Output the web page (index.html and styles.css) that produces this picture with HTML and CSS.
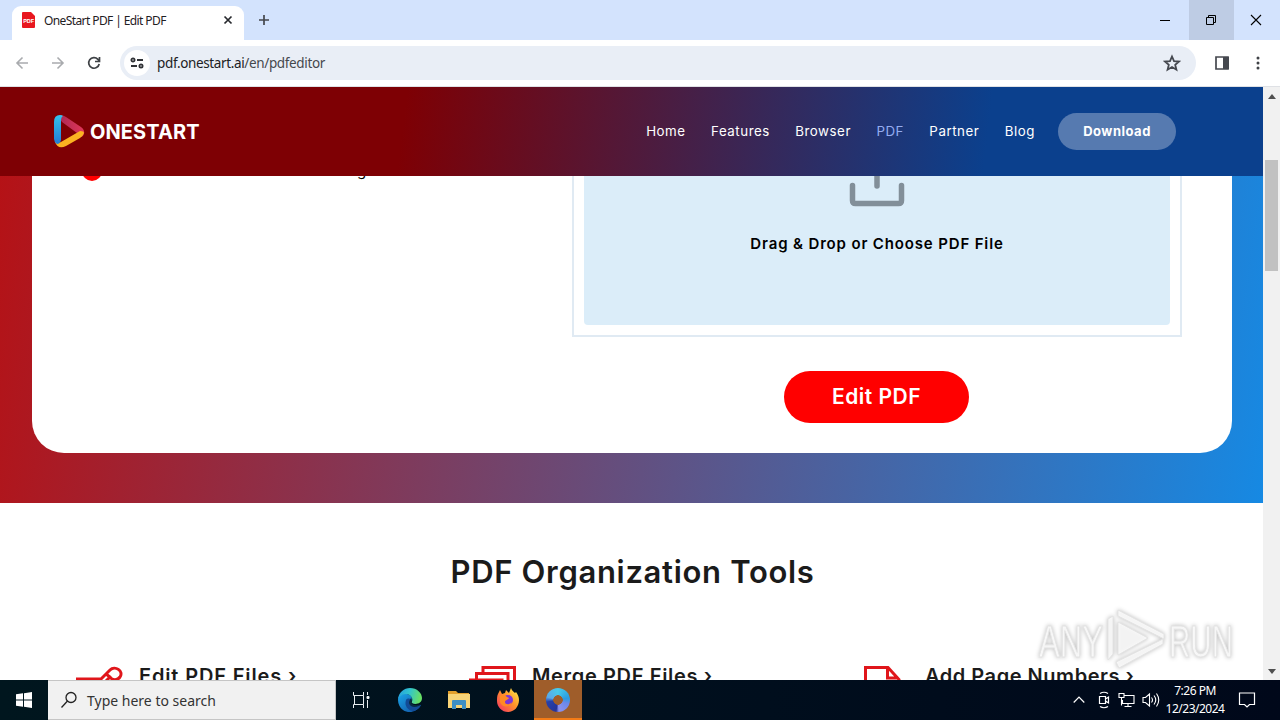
FILE: index.html
```html
<!DOCTYPE html>
<html lang="en">
<head>
    <meta charset="UTF-8">
    <meta name="viewport" content="width=device-width, initial-scale=1.0">
    <title>OneStart PDF | Edit PDF</title>
    <link rel="stylesheet" href="styles.css">
</head>
<body>
    <div class="tab-strip">
        <div class="tab">
            <svg class="favicon" width="14" height="16" viewBox="0 0 14 16"><path fill="#e8171f" d="M1 0h8l4 4v11q0 1-1 1H1q-1 0-1-1V1q0-1 1-1z"/><text x="6.7" y="11" text-anchor="middle" class="favicon-text">PDF</text></svg>
            <span class="tab-title">OneStart PDF | Edit PDF</span>
            <svg class="tab-close" width="10" height="10" viewBox="0 0 10 10"><path d="M1.5 1.5l7 7m0-7l-7 7" stroke="#27292d" stroke-width="1.7"/></svg>
        </div>
        <svg class="new-tab" width="12" height="12" viewBox="0 0 12 12"><path d="M6 1v10M1 6h10" stroke="#44474c" stroke-width="1.7"/></svg>
        <div class="window-buttons">
            <span><svg width="12" height="12" viewBox="0 0 12 12"><path d="M1 6.5h10" stroke="#000"/></svg></span>
            <span class="restore"><svg width="12" height="12" viewBox="0 0 12 12" fill="none" stroke="#000"><path d="M1.5 3.5h7v7h-7zM3.5 3.500v-2h7v7h-2"/></svg></span>
            <span><svg width="12" height="12" viewBox="0 0 12 12"><path d="M1 1l10 10M11 1L1 11" stroke="#000" stroke-width="1.1"/></svg></span>
        </div>
    </div>

    <div class="toolbar">
        <svg width="16" height="16" viewBox="0 0 16 16" fill="none" stroke="#a9abae" stroke-width="1.6"><path d="M14 8H3m5.500-5.500L3 8l5.500 5.500"/></svg>
        <svg width="16" height="16" viewBox="0 0 16 16" fill="none" stroke="#a9abae" stroke-width="1.6"><path d="M2 8h11M7.500 2.500L13 8l-5.500 5.500"/></svg>
        <svg width="16" height="16" viewBox="0 0 16 16" fill="none" stroke="#3f4246" stroke-width="1.7"><path d="M13.200 9a5.300 5.300 0 1 1-1.300-4.700L13.500 6M13.500 2v4.500H9"/></svg>
        <div class="address-bar">
            <span class="site-info"><svg width="14" height="14" viewBox="0 0 14 14" fill="none" stroke="#303236" stroke-width="1.8"><circle cx="3" cy="4" r="1.600"/><path d="M7 4h6M1 10h6"/><circle cx="11" cy="10" r="1.600"/></svg></span>
            <span class="url">pdf.onestart.ai<span>/en/pdfeditor</span></span>
            <svg class="star" width="18" height="18" viewBox="0 0 18 18" fill="none" stroke="#45484f" stroke-width="1.800"><path d="M9 2.500l2 4.600 5 .4-3.800 3.300 1.200 4.900L9 13.100l-4.400 2.600 1.200-4.900L2 7.500l5-.4z"/></svg>
        </div>
        <svg class="panel-icon" width="16" height="16" viewBox="0 0 16 16"><path d="M2 2h12v12H2z" fill="none" stroke="#45484f" stroke-width="1.700"/><path fill="#45484f" d="M9 2h6v12H9z"/></svg>
        <svg class="dots" width="4" height="16" viewBox="0 0 4 16" fill="#3f4246"><circle cx="2" cy="3" r="1.500"/><circle cx="2" cy="8" r="1.500"/><circle cx="2" cy="13" r="1.500"/></svg>
    </div>

    <div class="viewport">
        <div class="page">
            <header class="site-header">
                <div class="logo">
                    <svg width="32" height="36" viewBox="0 0 32 36" fill="none" stroke-linecap="round">
                        <defs>
                            <linearGradient id="logoBlue" x1="0" y1="0" x2="0" y2="1"><stop offset="0" stop-color="#34c4ee"/><stop offset="1" stop-color="#237ad6"/></linearGradient>
                            <linearGradient id="logoRed"><stop offset="0" stop-color="#a92954"/><stop offset="1" stop-color="#e23658"/></linearGradient>
                        </defs>
                        <path fill="url(#logoRed)" d="M5 2Q9 0 13 3l15 10q4 3 3 7-1 3-4 3l-3-4L9 8z"/>
                        <path fill="#fbb321" d="M2 25q1 5 6 3l19-11q4 0 4 2-1 3-4 5l-14 8q-8 4-11-4z"/>
                        <path fill="url(#logoBlue)" d="M10 2Q8 3 8 7v19q-1 4-4 4-3-2-3-5V8q0-7 6-7 2 0 3 1z"/>
                    </svg>
                    <span>ONESTART</span>
                </div>
                <nav class="menu">
                    <a>Home</a>
                    <a>Features</a>
                    <a>Browser</a>
                    <a class="active">PDF</a>
                    <a>Partner</a>
                    <a>Blog</a>
                </nav>
                <a class="download">Download</a>
            </header>

            <section class="hero">
                <div class="hero-card">
                    <div class="hero-text">
                        <span class="bullet"></span>
                        <span class="bullet-text">g</span>
                    </div>
                    <div class="hero-upload">
                        <div class="drop-frame">
                            <div class="drop-zone">
                                <svg width="56" height="31" viewBox="0 0 56 31" fill="none" stroke="#828f99" stroke-width="5.500" stroke-linecap="round" stroke-linejoin="round"><path d="M3.500 9.500v15q0 3 3 3h43q3 0 3-3v-15M28-5v15"/></svg>
                                <p>Drag &amp; Drop or Choose PDF File</p>
                            </div>
                        </div>
                        <a class="edit-button">Edit PDF</a>
                    </div>
                </div>
            </section>

            <section class="tools">
                <h2>PDF Organization Tools</h2>
                <div class="tools-grid">
                    <div class="tool">
                        <svg width="48" height="40" viewBox="0 0 48 40" fill="none" stroke="#e0161b" stroke-width="3"><path d="M0 13h25L34 4c5-5 14 1 10 7-3 4-8 3-10 0l-4-3M34 11l-8 8"/></svg>
                        <h3 class="t-edit">Edit PDF Files ›</h3>
                    </div>
                    <div class="tool">
                        <svg width="48" height="40" viewBox="0 0 48 40" fill="none" stroke="#e0161b" stroke-width="3"><path d="M14 7V1.500h31.500V30M7.500 13V7.500H39V32M0 14h33v20"/></svg>
                        <h3 class="t-merge">Merge PDF Files ›</h3>
                    </div>
                    <div class="tool">
                        <svg width="48" height="40" viewBox="0 0 48 40" fill="none" stroke="#e0161b" stroke-width="3"><path d="M3.500 40V1.500H26l11 12V40M25.500 2v10H36"/></svg>
                        <h3 class="t-pages">Add Page Numbers ›</h3>
                    </div>
                </div>
            </section>
        </div>
        <div class="scrollbar">
            <svg width="8" height="5" viewBox="0 0 8 5"><path fill="#505050" d="M0 5l4-5 4 5z"/></svg>
            <span class="thumb"></span>
            <svg class="down" width="8" height="5" viewBox="0 0 8 5"><path fill="#505050" d="M0 0l4 5 4-5z"/></svg>
        </div>
    </div>

    <div class="taskbar">
        <div class="start"><svg width="16" height="16" viewBox="0 0 16 16" fill="#fff"><path d="M0 2.300L7 1.300v6.200H0zM8 1.200L16 0v7.500H8zM0 8.500h7v6.200l-7-1zM8 8.500h8V16l-8-1.200z"/></svg></div>
        <div class="search">
            <svg width="18" height="18" viewBox="0 0 18 18" fill="none" stroke="#222" stroke-width="1.300"><circle cx="11" cy="6.500" r="5"/><path d="M7.500 10L1.500 16.500"/></svg>
            <span>Type here to search</span>
        </div>
        <div class="task-item"><svg width="18" height="18" viewBox="0 0 18 18" fill="none" stroke="#e8edf0"><path d="M1.500 1v3.500h10V1M1.500 17v-3.500h10V17M2.500 4.500v9M11.500 4.500v9M15.500 1v3M15.500 9v8"/><path fill="#fff" d="M15 5.500h2v2h-2z"/></svg></div>
        <div class="task-item">
            <svg width="26" height="26" viewBox="0 0 26 26">
                <defs>
                    <linearGradient id="edgeTop" x1="0" y1="0" x2="1" y2=".2"><stop offset="0" stop-color="#249be0"/><stop offset=".5" stop-color="#31c4cf"/><stop offset="1" stop-color="#67df66"/></linearGradient>
                    <linearGradient id="edgeBody" x1="0" y1="0" x2="1" y2="1"><stop offset="0" stop-color="#1aa5e9"/><stop offset="1" stop-color="#114e9e"/></linearGradient>
                </defs>
                <path fill="url(#edgeBody)" d="M1 13C1 8 6 6 10 7c5 1 6 5 4 7-2 4 4 7 10 4-4 7-12 9-18 5-3-2-5-6-5-10z"/>
                <path fill="#124b96" d="M9 13c-2 6 2 11 8 11 3-1 6-3 7-6-5 3-12 1-10-5-1-2-4-2-5 0z"/>
                <path fill="url(#edgeTop)" d="M1 12C2 5 7 1 13 1c7 0 12 5 12 10 0 6-7 7-10 5-1-1 1-2 0-5C13 6 5 5 1 12z"/>
                <path fill="#082b42" d="M14 11c2 2-1 4 1 6 3 2 7 1 9 0-3 4-11 4-12-1 0-2 1-3 2-5z"/>
            </svg>
        </div>
        <div class="task-item"><svg width="22" height="20" viewBox="0 0 22 20"><path fill="#e3a02c" d="M0 1h8l2 2h11v15H0z"/><path fill="#f8d477" d="M0 4h22v14H0z"/><path fill="#3e8fc4" d="M4 19v-8q0-1 1-1h12q1 0 1 1v8h-4v-4H8v4z"/></svg></div>
        <div class="task-item">
            <svg width="24" height="24" viewBox="0 0 24 24">
                <defs><linearGradient id="fox" x1="1" y1="0" x2="0" y2="1"><stop offset="0" stop-color="#fff34f"/><stop offset=".45" stop-color="#ff9529"/><stop offset="1" stop-color="#f52c67"/></linearGradient></defs>
                <path fill="url(#fox)" d="M2 6l2-4 2 4 3-1 1-3 3 3L15 0c1 3 3 4 4 5l1-1c2 3 3 5 3 8 0 7-5 12-11 12S1 19 1 13c0-3 0-5 1-7z"/>
                <circle cx="12" cy="12" r="5" fill="#7a35d7"/><path fill="#ff8a24" d="M4 8c3-2 5-1 7 1l2 1c-1 2-4 2-4 4 0 3 5 3 7 0-1 6-10 6-12 0z"/>
            </svg>
        </div>
        <div class="task-item current">
            <span class="ring"></span>
        </div>
        <div class="tray">
            <svg width="12" height="8" viewBox="0 0 12 8" fill="none" stroke="#fff" stroke-width="1.200"><path d="M.7 6.500L6 1.200l5.300 5.300"/></svg>
            <svg class="cam" width="14" height="18" viewBox="0 0 14 18" fill="none" stroke="#fff" stroke-width="1.200"><path d="M2.500 5.500h6v7h-6zM8.500 8l3-2v6l-3-2M3 2.500Q7 0 11 2.500M3 15.500q4 2.500 8 0"/></svg>
            <svg class="net" width="17" height="16" viewBox="0 0 17 16" fill="none" stroke="#fff" stroke-width="1.100"><path d="M6 3.500h10v8H4.500V8M10 11.500v3M6.500 14.500h7M1 1.500h5v4H1zM3.500 5.500v8"/></svg>
            <svg class="vol" width="18" height="16" viewBox="0 0 18 16" fill="none" stroke="#fff" stroke-width="1.100"><path d="M1 5.500h2.500l4-3.500v12l-4-3.500H1zM9.500 5.500q2 2.500 0 5M12 3.500q3.500 4.500 0 9M14.500 1.500q4.500 6.500 0 13"/></svg>
            <div class="clock"><span>7:26 PM</span><span>12/23/2024</span></div>
            <svg class="notice" width="18" height="18" viewBox="0 0 18 18" fill="none" stroke="#fff" stroke-width="1.200"><path d="M1.500 2h15v11.500h-5L9 16l-2.500-2.500h-5z"/></svg>
        </div>
    </div>

    <svg class="watermark" width="200" height="70" viewBox="0 0 200 70">
        <g class="watermark-text"><text x="3" y="50" textLength="64" lengthAdjust="spacingAndGlyphs">ANY</text><text x="133" y="50" textLength="64" lengthAdjust="spacingAndGlyphs">RUN</text></g>
        <path class="watermark-mark" d="M72 53V12l5-3v38zM82 3l46 24v5L82 9zM82 15l30 16-30 17zM80 55l47-23v5L83 61z"/>
    </svg>
</body>
</html>
```
FILE: styles.css
```css
* {
    box-sizing: border-box;
}
body {
    margin: 0;
    width: 1280px;
    height: 720px;
    overflow: hidden;
    display: flex;
    flex-direction: column;
    position: relative;
    background: #fff;
    font-family: "Noto Sans", "Open Sans", sans-serif;
}
svg {
    display: block;
    flex-shrink: 0;
}
h2, h3, p {
    margin: 0;
}

/* browser window */
.tab-strip {
    height: 40px;
    flex-shrink: 0;
    display: flex;
    background: #d3e3fd;
}
.tab {
    width: 232px;
    height: 34px;
    margin: 6px 0 0 12px;
    padding: 0 11px 6px 10px;
    display: flex;
    align-items: center;
    background: #fff;
    border-radius: 9px 9px 0 0;
}
.favicon-text {
    font: bold 5.500px "Liberation Sans", sans-serif;
    fill: #fff;
}
.tab-title {
    margin-left: 8px;
    font-size: 12px;
    letter-spacing: -0.6px;
    color: #1f2023;
    white-space: nowrap;
}
.tab-close {
    margin-left: auto;
}
.new-tab {
    margin: 14px 0 0 14px;
}
.window-buttons {
    margin-left: auto;
    display: flex;
}
.window-buttons span {
    width: 46px;
    padding-right: 2px;
    display: flex;
    align-items: center;
    justify-content: center;
}
.window-buttons .restore {
    width: 45px;
    padding-right: 1px;
    background: #becce4;
}
.toolbar {
    height: 47px;
    flex-shrink: 0;
    display: flex;
    align-items: center;
    gap: 20px;
    padding: 0 20px 1px 14px;
    background: #fff;
    border-bottom: 1px solid #dfe1e5;
    border-radius: 0 8px 0 0;
}
.address-bar {
    width: 1076px;
    height: 34px;
    margin-left: -2px;
    padding: 0 15px 0 4px;
    display: flex;
    align-items: center;
    background: #e9eef6;
    border-radius: 17px;
}
.site-info {
    width: 26px;
    height: 26px;
    display: flex;
    align-items: center;
    justify-content: center;
    background: #fff;
    border-radius: 50%;
}
.url {
    margin-left: 7px;
    font-size: 13.500px;
    letter-spacing: -0.36px;
    color: #202124;
}
.url span {
    color: #45484d;
}
.star {
    margin-left: auto;
}
.panel-icon {
    margin-left: -2px;
}
.dots {
    margin-left: auto;
}
.viewport {
    height: 593px;
    flex-shrink: 0;
    display: flex;
    overflow: hidden;
}
.page {
    width: 1263px;
    font-family: Inter, "Open Sans", sans-serif;
}
.scrollbar {
    width: 17px;
    display: flex;
    flex-direction: column;
    align-items: center;
    padding: 7px 0 6px;
    background: #f1f1f1;
}
.thumb {
    width: 13px;
    height: 111px;
    margin-top: 61px;
    background: #c1c1c1;
}
.scrollbar .down {
    margin-top: auto;
}

/* site header */
.site-header {
    height: 89px;
    display: flex;
    align-items: center;
    padding: 0 87px 0 53px;
    background: linear-gradient(97deg, #7e0004 0%, #7e0004 32%, #0b408d 78%, #0b408d 100%);
    color: #fff;
}
.logo {
    display: flex;
    align-items: center;
    gap: 5px;
    font-size: 20px;
    font-weight: 700;
    letter-spacing: 0.1px;
}
.menu {
    display: flex;
    gap: 25.4px;
    margin-left: auto;
    font-size: 13.300px;
    line-height: 18px;
    padding-bottom: 1px;
    letter-spacing: 0.55px;
}
.menu .active {
    color: #94acf0;
}
.download {
    width: 118px;
    height: 37px;
    margin-left: 23px;
    line-height: 37px;
    text-align: center;
    font-size: 13px;
    font-weight: 700;
    letter-spacing: 0.5px;
    background: #567ab0;
    border-radius: 19px;
}

/* upload area */
.hero {
    height: 327px;
    padding: 0 31px 50px 32px;
    background: linear-gradient(98deg, #b51216 0%, #1689e3 100%);
}
.hero-card {
    height: 277px;
    display: flex;
    padding-right: 50px;
    background: #fff;
    border-radius: 0 0 32px 32px;
}
.hero-text {
    width: 540px;
    height: 6px;
    padding-left: 50px;
    display: flex;
    align-items: flex-end;
    overflow: hidden;
}
.bullet {
    width: 20px;
    height: 20px;
    margin-bottom: 1px;
    flex-shrink: 0;
    background: #f00;
    border-radius: 50%;
}
.bullet-text {
    margin: 0 0 3px 255px;
    font-size: 15px;
    line-height: 17px;
}
.hero-upload {
    width: 610px;
    display: flex;
    flex-direction: column;
    align-items: center;
}
.drop-frame {
    width: 610px;
    height: 161px;
    padding: 0 10px 10px;
    border: 2px solid #e0eaf3;
    border-top: 0;
}
.drop-zone {
    height: 149px;
    display: flex;
    flex-direction: column;
    align-items: center;
    background: #dbedf9;
    border-radius: 0 0 4px 4px;
}
.drop-zone p {
    margin-top: 27px;
    font-size: 15px;
    line-height: 20px;
    font-weight: 600;
    letter-spacing: 0.85px;
}
.edit-button {
    width: 185px;
    height: 52px;
    margin: 34px 1px 0 0;
    line-height: 52px;
    text-align: center;
    color: #fff;
    font-size: 21px;
    font-weight: 600;
    letter-spacing: 0.5px;
    background: #f00;
    border-radius: 26px;
}

/* tools list */
.tools h2 {
    padding: 49px 0 0 2px;
    text-align: center;
    font-size: 31px;
    line-height: 40px;
    font-weight: 600;
    letter-spacing: 0.68px;
    color: #1b1b1b;
}
.tools-grid {
    display: grid;
    grid-template-columns: repeat(3, 393px);
    padding: 71px 0 0 76px;
}
.tool {
    display: flex;
}
.tool svg {
    margin-top: 3px;
}
.tool h3 {
    margin-left: 15px;
    font-size: 20px;
    line-height: 26px;
    font-weight: 600;
    color: #1b1b1b;
    white-space: nowrap;
}
.tool .t-edit {
    letter-spacing: 0.85px;
}
.tool .t-merge {
    letter-spacing: 0.65px;
}
.tool .t-pages {
    letter-spacing: 0.53px;
}

/* desktop taskbar */
.taskbar {
    height: 40px;
    flex-shrink: 0;
    display: flex;
    background: linear-gradient(90deg, #00161e, #000e1d 60%, #00081a);
}
.start {
    width: 48px;
    display: flex;
    align-items: center;
    justify-content: center;
}
.search {
    width: 288px;
    display: flex;
    align-items: center;
    gap: 9px;
    padding-left: 12px;
    background: #f1f1f1;
    border: 1px solid #c5c5c5;
    border-left: 0;
    color: #333;
    font-size: 14px;
}
.task-item {
    width: 50px;
    display: flex;
    align-items: center;
    justify-content: center;
}
.task-item:nth-child(3) {
    width: 49px;
}
.task-item:nth-child(5) {
    width: 48px;
}
.task-item:nth-child(6) {
    width: 51px;
    padding-right: 1px;
}
.task-item.current {
    width: 48px;
    background: #9f5d2a;
    border-bottom: 2px solid #f47b16;
}
.ring {
    width: 24px;
    height: 24px;
    margin-top: 1px;
    border-radius: 50%;
    background: radial-gradient(circle, #9f5d2a 4.5px, transparent 5px), conic-gradient(#48cbea, #2a9be0 80deg, #6c88ea 110deg, #8d92ee 175deg, #26349a 190deg, #2740a8 260deg, #5ba8e8 285deg, #48cbea);
}
.tray {
    margin-left: auto;
    display: flex;
    align-items: center;
    padding-right: 24px;
    color: #fff;
}
.cam {
    margin-left: 12px;
}
.net {
    margin-left: 7px;
}
.vol {
    margin-left: 7px;
}
.clock {
    width: 60px;
    margin: 0 1px 0 5px;
    display: flex;
    flex-direction: column;
    align-items: center;
    font-size: 12px;
    line-height: 18px;
    letter-spacing: -0.5px;
}
.notice {
    margin-left: 12px;
}
.watermark {
    position: absolute;
    left: 1036px;
    top: 607px;
    filter: drop-shadow(0 0 2px rgba(0, 0, 0, 0.3));
}
.watermark-text {
    font: 44px "Liberation Sans", sans-serif;
    fill: rgba(255, 255, 255, 0.8);
    stroke: #e3e3e3;
    stroke-width: 1;
}
.watermark-mark {
    fill: rgba(255, 255, 255, 0.8);
    stroke: #e3e3e3;
}
```
